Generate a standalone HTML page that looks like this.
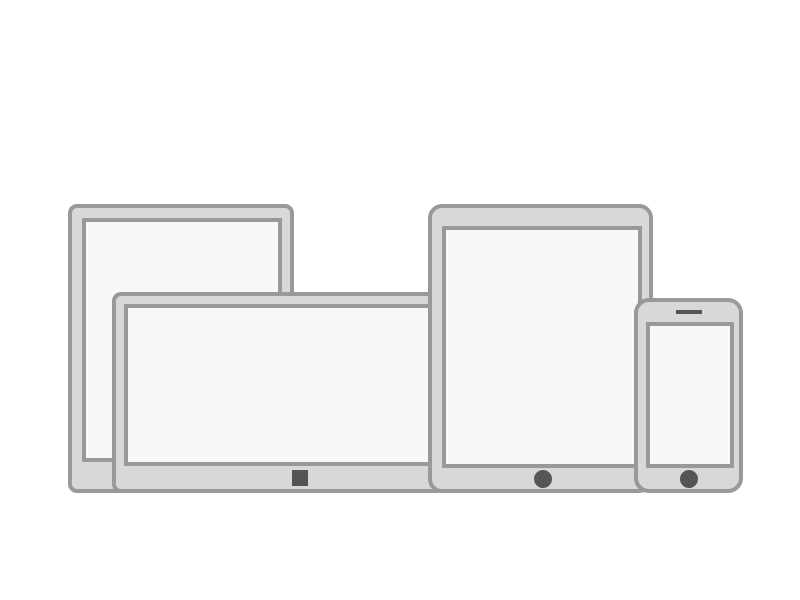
<!DOCTYPE html>
<html><head><style>html,body{margin:0;padding:0;background:#fff;width:800px;height:600px;overflow:hidden}</style></head>
<body>
<svg width="800" height="600" viewBox="0 0 800 600" xmlns="http://www.w3.org/2000/svg">
<g stroke="#999" stroke-width="4">
<!-- left tablet -->
<rect x="70" y="206" width="222" height="285" rx="7" fill="#d8d8d8"/>
<rect x="84" y="220" width="196" height="240" fill="#f8f8f8"/>
<!-- laptop/tablet landscape -->
<rect x="114" y="294" width="330" height="197" rx="7" fill="#d8d8d8"/>
<rect x="126" y="306" width="320" height="158" fill="#f8f8f8"/>
<!-- ipad -->
<rect x="430" y="206" width="221" height="285" rx="12" fill="#d8d8d8"/>
<rect x="444" y="228" width="196" height="238" fill="#f8f8f8"/>
<!-- phone -->
<rect x="636" y="300" width="105" height="191" rx="13" fill="#d8d8d8"/>
<rect x="648" y="324" width="84" height="142" fill="#f8f8f8"/>
</g>
<rect x="292" y="470" width="16" height="16" fill="#555"/>
<circle cx="543" cy="479" r="9" fill="#555"/>
<circle cx="689" cy="479" r="9" fill="#555"/>
<rect x="676" y="310" width="26" height="4" fill="#555"/>
</svg>
</body></html>
